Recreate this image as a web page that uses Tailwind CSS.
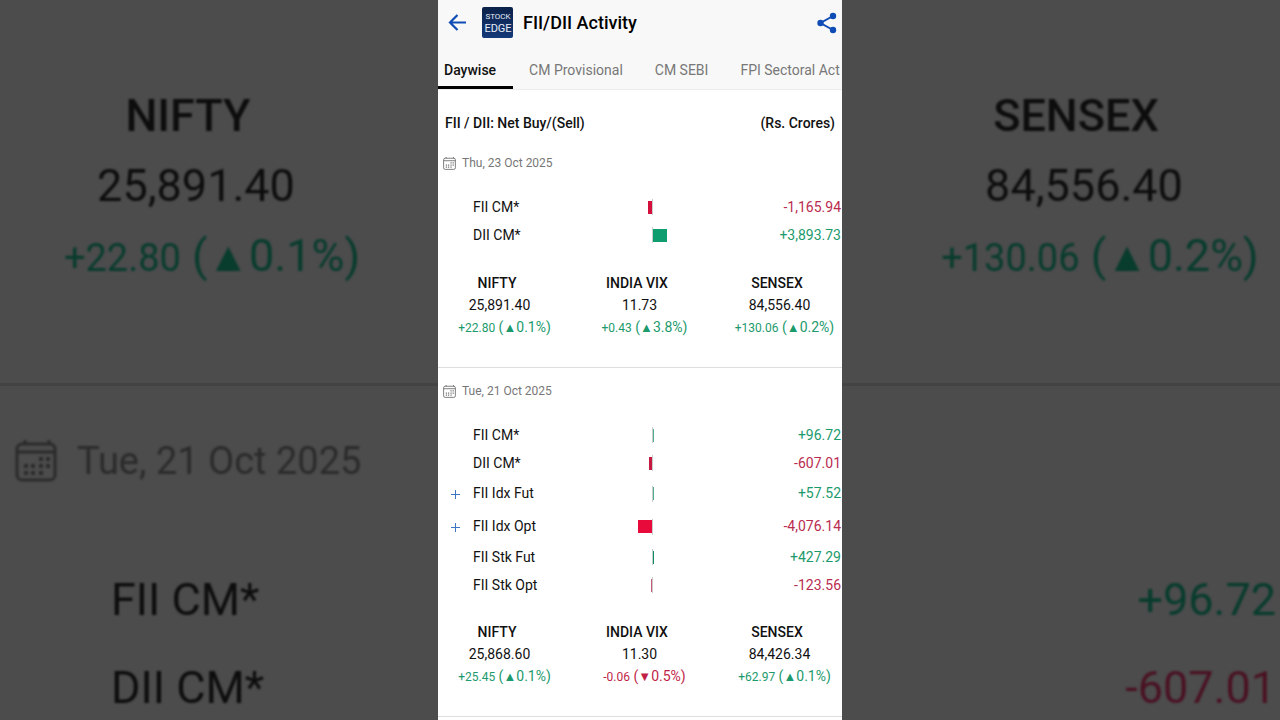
<!doctype html>
<html lang="en">
  <head>
    <meta charset="UTF-8" />
    <meta name="viewport" content="width=device-width, initial-scale=1.0" />
    <title>FII/DII Activity</title>
    <script src="https://cdn.jsdelivr.net/npm/@tailwindcss/browser@4"></script>
  </head>
  <body class="bg-[#4c4c4c] font-['Roboto',sans-serif] text-[#111]">
    <svg class="hidden">
      <symbol id="calendar" viewBox="0 0 42 42">
        <g fill="none" stroke="currentColor" stroke-width="3">
          <rect x="2" y="4" width="38" height="36" rx="5" />
          <path d="M2 12h38M10 0v5M34 0v5" />
        </g>
        <path
          d="M24 19h4M31 19h4M9 26h4M16 26h4M24 26h4M31 26h4M9 33h4M16 33h4M24 33h4"
          stroke="currentColor"
          stroke-width="4"
        />
      </symbol>
    </svg>

    <div class="flex h-screen overflow-hidden">
      <!-- Left backdrop -->
      <div aria-hidden="true" class="min-w-0 flex-1 overflow-hidden pt-[81px] text-[45px] leading-[70px] whitespace-nowrap text-[#0d0d0d]">
        <div class="w-[376px] text-center blur-[1px]">
          <p class="font-medium">NIFTY</p>
          <p class="pl-4">25,891.40</p>
          <p class="pl-12 text-[#083c2d]">
            <span class="text-[38px]">+22.80</span> (<span class="font-['Liberation_Sans'] text-[42px] leading-none">▲</span>0.1%)
          </p>
        </div>
        <div class="mt-[90px] h-[3px] bg-[#434343]"></div>
        <div class="mt-[45px] flex h-[60px] items-center gap-5 pl-[15px] text-[38px] text-[#2b2b2b] blur-[1px]">
          <svg class="size-[42px]"><use href="#calendar" /></svg>
          <span>Tue, 21 Oct 2025</span>
        </div>
        <div class="mt-[65px] pl-[111px] leading-[88px] blur-[1px]">
          <p>FII CM*</p>
          <p>DII CM*</p>
        </div>
      </div>

      <!-- App screen -->
      <main class="w-[404px] shrink-0 overflow-x-hidden overflow-y-auto bg-white">
        <header class="border-b border-[#ececec] bg-[#f8f8f8]">
          <div class="flex h-[45px] items-center pr-1 pl-[7px]">
            <button type="button" aria-label="Back" class="text-[#0f4cb5]">
              <svg class="size-6" viewBox="0 0 24 24" fill="none" stroke="currentColor" stroke-width="2.200">
                <path d="M21 11.500H5M12.500 4L5 11.500l7.500 7.500" />
              </svg>
            </button>
            <svg class="ml-[13px] size-[31px]" viewBox="0 0 31 31" role="img" aria-label="Stock Edge">
              <defs>
                <linearGradient id="navy" x1="0" y1="0" x2="0" y2="1">
                  <stop offset="0" stop-color="#0b2148" />
                  <stop offset="1" stop-color="#15397a" />
                </linearGradient>
              </defs>
              <rect width="31" height="31" rx="2" fill="url(#navy)" />
              <g fill="#e8edf6" text-anchor="middle" font-family="Roboto, sans-serif">
                <text x="16" y="12" font-size="8">STOCK</text>
                <text x="16" y="25" font-size="11">EDGE</text>
              </g>
            </svg>
            <h1 class="ml-[10px] text-[18px] font-medium text-black">FII/DII Activity</h1>
            <button type="button" aria-label="Share" class="ml-auto text-[#0f4cb5]">
              <svg class="size-[22px]" viewBox="0 0 22 22" fill="currentColor">
                <path d="M17 4L4.500 11 17 18" fill="none" stroke="currentColor" stroke-width="2" />
                <circle cx="17" cy="4" r="3.200" />
                <circle cx="4.500" cy="11" r="3.200" />
                <circle cx="17" cy="18" r="3.200" />
              </svg>
            </button>
          </div>
          <nav class="flex h-[44px] overflow-hidden text-[14px] whitespace-nowrap text-[#777]">
            <button type="button" class="border-b-[3px] border-black pt-[9px] pr-[17px] pl-[6px] font-medium text-[#111]">Daywise</button>
            <button type="button" class="border-b-[3px] border-transparent px-4 pt-[9px]">CM Provisional</button>
            <button type="button" class="border-b-[3px] border-transparent px-4 pt-[9px]">CM SEBI</button>
            <button type="button" class="border-b-[3px] border-transparent pt-[9px] pl-4">FPI Sectoral Act</button>
          </nav>
        </header>

        <div class="flex justify-between pt-[23px] pr-[7px] pb-[7px] pl-[7px] text-[14px] leading-5 font-medium">
          <h2>FII / DII: Net Buy/(Sell)</h2>
          <span>(Rs. Crores)</span>
        </div>

        <section class="border-b border-[#dedede] pt-[13px] pb-7">
          <div class="mb-5 flex h-5 items-center gap-[6px] pl-[5px] text-[12px] text-[#777]">
            <svg class="size-[13px]"><use href="#calendar" /></svg>
            <span>Thu, 23 Oct 2025</span>
          </div>
          <table class="w-full table-fixed text-[14px]">
            <colgroup>
              <col class="w-[35px]" />
              <col class="w-[139px]" />
              <col class="w-[81px]" />
              <col />
            </colgroup>
            <tbody>
              <tr class="h-7">
                <td></td>
                <th scope="row" class="text-left font-normal">FII CM*</th>
                <td>
                  <div class="flex items-center">
                    <div class="flex flex-1 justify-end"><div class="h-[13px] w-1 bg-[#d40f3c]"></div></div>
                    <div class="h-4 w-px bg-[#ccc]"></div>
                    <div class="flex-1"></div>
                  </div>
                </td>
                <td class="pr-px text-right text-[#b92c50]">-1,165.94</td>
              </tr>
              <tr class="h-7">
                <td></td>
                <th scope="row" class="text-left font-normal">DII CM*</th>
                <td>
                  <div class="flex items-center">
                    <div class="flex-1"></div>
                    <div class="h-4 w-px bg-[#ccc]"></div>
                    <div class="flex flex-1"><div class="h-[13px] w-[14px] bg-[#0f9d70]"></div></div>
                  </div>
                </td>
                <td class="pr-px text-right text-[#1c9a6c]">+3,893.73</td>
              </tr>
            </tbody>
          </table>
          <div class="mt-[23px] flex justify-between pr-[7px] pl-px text-center text-[14px] leading-[22px] whitespace-nowrap">
            <div class="w-[116px]">
              <h3 class="font-medium">NIFTY</h3>
              <p class="pl-[5px]">25,891.40</p>
              <p class="pl-[15px] text-[#1c9a6c]"><span class="text-[12px]">+22.80</span> (<span class="font-['Liberation_Sans'] text-[13px] leading-none">▲</span>0.1%)</p>
            </div>
            <div class="w-[116px]">
              <h3 class="font-medium">INDIA VIX</h3>
              <p class="pl-[5px]">11.73</p>
              <p class="pl-[15px] text-[#1c9a6c]"><span class="text-[12px]">+0.43</span> (<span class="font-['Liberation_Sans'] text-[13px] leading-none">▲</span>3.8%)</p>
            </div>
            <div class="w-[116px]">
              <h3 class="font-medium">SENSEX</h3>
              <p class="pl-[5px]">84,556.40</p>
              <p class="pl-[15px] text-[#1c9a6c]"><span class="text-[12px]">+130.06</span> (<span class="font-['Liberation_Sans'] text-[13px] leading-none">▲</span>0.2%)</p>
            </div>
          </div>
        </section>

        <section class="border-b border-[#dedede] pt-[13px] pb-7">
          <div class="mb-5 flex h-5 items-center gap-[6px] pl-[5px] text-[12px] text-[#777]">
            <svg class="size-[13px]"><use href="#calendar" /></svg>
            <span>Tue, 21 Oct 2025</span>
          </div>
          <table class="w-full table-fixed text-[14px]">
            <colgroup>
              <col class="w-[35px]" />
              <col class="w-[139px]" />
              <col class="w-[81px]" />
              <col />
            </colgroup>
            <tbody>
              <tr class="h-7">
                <td></td>
                <th scope="row" class="text-left font-normal">FII CM*</th>
                <td>
                  <div class="flex items-center">
                    <div class="flex-1"></div>
                    <div class="h-4 w-px bg-[#ccc]"></div>
                    <div class="flex flex-1"><div class="h-[13px] w-px bg-[#4fb08b]"></div></div>
                  </div>
                </td>
                <td class="pr-px text-right text-[#1c9a6c]">+96.72</td>
              </tr>
              <tr class="h-7">
                <td></td>
                <th scope="row" class="text-left font-normal">DII CM*</th>
                <td>
                  <div class="flex items-center">
                    <div class="flex flex-1 justify-end"><div class="h-[13px] w-[3px] bg-[#c41a42]"></div></div>
                    <div class="h-4 w-px bg-[#ccc]"></div>
                    <div class="flex-1"></div>
                  </div>
                </td>
                <td class="pr-px text-right text-[#b92c50]">-607.01</td>
              </tr>
              <tr class="h-[33px]">
                <td>
                  <button type="button" aria-label="Expand FII Idx Fut" class="ml-3 block text-[#3f74c4]">
                    <svg class="size-[10px]" viewBox="0 0 10 10" stroke="currentColor"><path d="M5.500 1v9M1 5.500h9" /></svg>
                  </button>
                </td>
                <th scope="row" class="text-left font-normal">FII Idx Fut</th>
                <td>
                  <div class="flex items-center">
                    <div class="flex-1"></div>
                    <div class="h-4 w-px bg-[#ccc]"></div>
                    <div class="flex flex-1"><div class="h-[13px] w-px bg-[#4fb08b]"></div></div>
                  </div>
                </td>
                <td class="pr-px text-right text-[#1c9a6c]">+57.52</td>
              </tr>
              <tr class="h-[33px]">
                <td>
                  <button type="button" aria-label="Expand FII Idx Opt" class="ml-3 block text-[#3f74c4]">
                    <svg class="size-[10px]" viewBox="0 0 10 10" stroke="currentColor"><path d="M5.500 1v9M1 5.500h9" /></svg>
                  </button>
                </td>
                <th scope="row" class="text-left font-normal">FII Idx Opt</th>
                <td>
                  <div class="flex items-center">
                    <div class="flex flex-1 justify-end"><div class="h-[13px] w-[14px] bg-[#e80a3a]"></div></div>
                    <div class="h-4 w-px bg-[#ccc]"></div>
                    <div class="flex-1"></div>
                  </div>
                </td>
                <td class="pr-px text-right text-[#b92c50]">-4,076.14</td>
              </tr>
              <tr class="h-7">
                <td></td>
                <th scope="row" class="text-left font-normal">FII Stk Fut</th>
                <td>
                  <div class="flex items-center">
                    <div class="flex-1"></div>
                    <div class="h-4 w-px bg-[#ccc]"></div>
                    <div class="flex flex-1"><div class="h-[13px] w-px bg-[#0c8f63]"></div></div>
                  </div>
                </td>
                <td class="pr-px text-right text-[#1c9a6c]">+427.29</td>
              </tr>
              <tr class="h-7">
                <td></td>
                <th scope="row" class="text-left font-normal">FII Stk Opt</th>
                <td>
                  <div class="flex items-center">
                    <div class="flex flex-1 justify-end"><div class="h-[13px] w-px bg-[#c75a76]"></div></div>
                    <div class="h-4 w-px bg-[#ccc]"></div>
                    <div class="flex-1"></div>
                  </div>
                </td>
                <td class="pr-px text-right text-[#b92c50]">-123.56</td>
              </tr>
            </tbody>
          </table>
          <div class="mt-[22px] flex justify-between pr-[7px] pl-px text-center text-[14px] leading-[22px] whitespace-nowrap">
            <div class="w-[116px]">
              <h3 class="font-medium">NIFTY</h3>
              <p class="pl-[5px]">25,868.60</p>
              <p class="pl-[15px] text-[#1c9a6c]"><span class="text-[12px]">+25.45</span> (<span class="font-['Liberation_Sans'] text-[13px] leading-none">▲</span>0.1%)</p>
            </div>
            <div class="w-[116px]">
              <h3 class="font-medium">INDIA VIX</h3>
              <p class="pl-[5px]">11.30</p>
              <p class="pl-[15px] text-[#c01f48]"><span class="text-[12px]">-0.06</span> (<span class="font-['Liberation_Sans'] text-[13px] leading-none">▼</span>0.5%)</p>
            </div>
            <div class="w-[116px]">
              <h3 class="font-medium">SENSEX</h3>
              <p class="pl-[5px]">84,426.34</p>
              <p class="pl-[15px] text-[#1c9a6c]"><span class="text-[12px]">+62.97</span> (<span class="font-['Liberation_Sans'] text-[13px] leading-none">▲</span>0.1%)</p>
            </div>
          </div>
        </section>
      </main>

      <!-- Right backdrop -->
      <div aria-hidden="true" class="min-w-0 flex-1 overflow-hidden pt-[81px] text-[45px] leading-[70px] whitespace-nowrap text-[#0d0d0d]">
        <div class="ml-[46px] w-[376px] text-center blur-[1px]">
          <p class="font-medium">SENSEX</p>
          <p class="pl-4">84,556.40</p>
          <p class="pl-12 text-[#083c2d]">
            <span class="text-[38px]">+130.06</span> (<span class="font-['Liberation_Sans'] text-[42px] leading-none">▲</span>0.2%)
          </p>
        </div>
        <div class="mt-[90px] h-[3px] bg-[#434343]"></div>
        <div class="mt-[170px] pr-1 text-right leading-[88px] blur-[1px]">
          <p class="text-[#083c2d]">+96.72</p>
          <p class="text-[#4a1222]">-607.01</p>
        </div>
      </div>
    </div>
  </body>
</html>
